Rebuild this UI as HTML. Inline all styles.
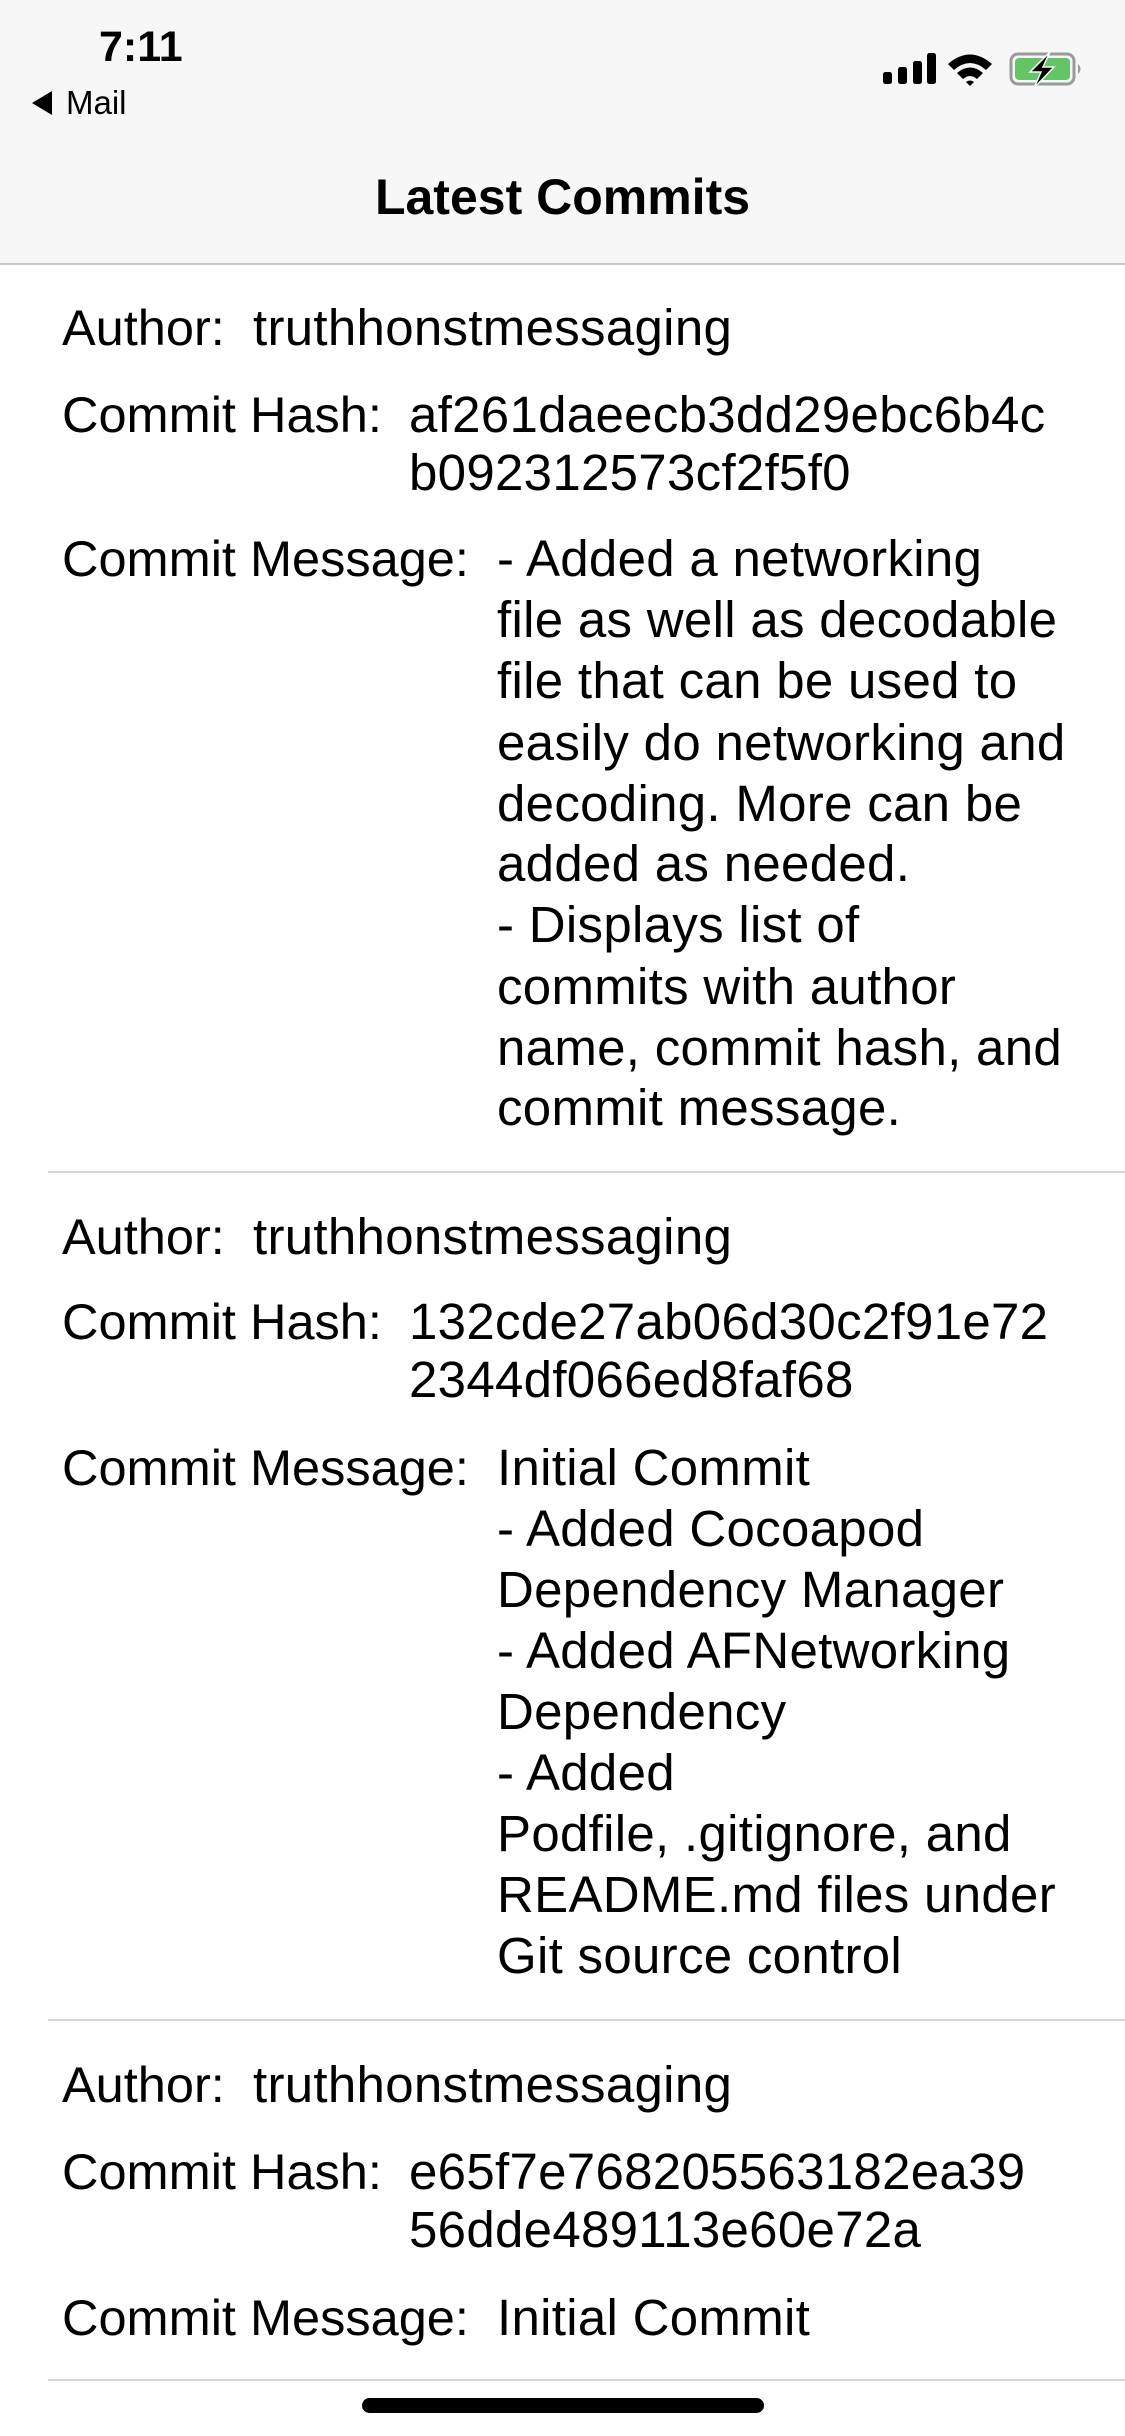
<!DOCTYPE html>
<html><head><meta charset="utf-8"><style>
html,body{margin:0;padding:0;}
body{width:1125px;height:2436px;position:relative;background:#fff;font-family:"Liberation Sans",sans-serif;color:#000;overflow:hidden;}
.hdr{position:absolute;left:0;top:0;width:1125px;height:263px;background:#f7f7f7;border-bottom:2px solid #c6c6c8;}
.t{position:absolute;height:60px;line-height:60px;font-size:51px;letter-spacing:0.3px;white-space:nowrap;}
.l{font-size:50.5px;letter-spacing:0;}
.sep{position:absolute;left:48px;right:0;height:2px;background:#d6d6d8;}
</style></head><body>
<div class="hdr"></div>
<div style="position:absolute;left:99px;top:22px;font-size:43px;font-weight:bold;line-height:50px;">7:11</div>
<svg style="position:absolute;left:32px;top:91px" width="20" height="24"><path d="M20 0 L20 24 L0 12 Z" fill="#000"/></svg>
<div style="position:absolute;left:66px;top:83px;font-size:33px;line-height:40px;">Mail</div>
<svg style="position:absolute;left:880px;top:50px" width="220" height="40">
<rect x="3" y="22" width="9" height="12" rx="2.5" fill="#000"/>
<rect x="18" y="17" width="9" height="17" rx="2.5" fill="#000"/>
<rect x="33" y="11" width="9" height="23" rx="2.5" fill="#000"/>
<rect x="47" y="3" width="9" height="31" rx="2.5" fill="#000"/>
<path d="M68 14 Q90 -5 112 14 L106 20 Q90 6 74 20 Z" fill="#000"/>
<path d="M77 23 Q90 12 103 23 L97 29 Q90 23 83 29 Z" fill="#000"/>
<path d="M86 32 Q90 29 94 32 L90 36 Z" fill="#000"/>
<rect x="131" y="4" width="63" height="30" rx="7" fill="none" stroke="#9a9a9a" stroke-width="3"/>
<rect x="135" y="8" width="55" height="22" rx="4" fill="#64c466"/>
<path d="M198 14 Q203 19 198 24 Z" fill="#9a9a9a"/>
<path d="M170 2 L150 22 L161 22 L154 38 L174 17 L163 17 Z" fill="#000" stroke="#f7f7f7" stroke-width="1.5"/>
</svg>
<div style="position:absolute;left:0;width:1125px;top:167px;text-align:center;font-size:50px;font-weight:bold;line-height:60px;">Latest Commits</div>

<div class="t l" style="left:62px;top:298px">Author:</div><div class="t" style="left:253px;top:298px">truthhonstmessaging</div>
<div class="t l" style="left:62px;top:385px">Commit Hash:</div>
<div class="t" style="left:409px;top:385px">af261daeecb3dd29ebc6b4c</div>
<div class="t" style="left:409px;top:443px">b092312573cf2f5f0</div>
<div class="t l" style="left:62px;top:529px">Commit Message:</div>
<div class="t" style="left:497px;top:529px">- Added a networking</div>
<div class="t" style="left:497px;top:590px">file as well as decodable</div>
<div class="t" style="left:497px;top:651px">file that can be used to</div>
<div class="t" style="left:497px;top:713px">easily do networking and</div>
<div class="t" style="left:497px;top:774px">decoding. More can be</div>
<div class="t" style="left:497px;top:834px">added as needed.</div>
<div class="t" style="left:497px;top:895px">- Displays list of</div>
<div class="t" style="left:497px;top:957px">commits with author</div>
<div class="t" style="left:497px;top:1018px">name, commit hash, and</div>
<div class="t" style="left:497px;top:1078px">commit message.</div>
<div class="sep" style="top:1171px"></div>

<div class="t l" style="left:62px;top:1207px">Author:</div><div class="t" style="left:253px;top:1207px">truthhonstmessaging</div>
<div class="t l" style="left:62px;top:1292px">Commit Hash:</div>
<div class="t" style="left:409px;top:1292px">132cde27ab06d30c2f91e72</div>
<div class="t" style="left:409px;top:1350px">2344df066ed8faf68</div>
<div class="t l" style="left:62px;top:1438px">Commit Message:</div>
<div class="t" style="left:497px;top:1438px">Initial Commit</div>
<div class="t" style="left:497px;top:1499px">- Added Cocoapod</div>
<div class="t" style="left:497px;top:1560px">Dependency Manager</div>
<div class="t" style="left:497px;top:1621px">- Added AFNetworking</div>
<div class="t" style="left:497px;top:1682px">Dependency</div>
<div class="t" style="left:497px;top:1743px">- Added</div>
<div class="t" style="left:497px;top:1804px">Podfile, .gitignore, and</div>
<div class="t" style="left:497px;top:1865px">README.md files under</div>
<div class="t" style="left:497px;top:1926px">Git source control</div>
<div class="sep" style="top:2019px"></div>

<div class="t l" style="left:62px;top:2055px">Author:</div><div class="t" style="left:253px;top:2055px">truthhonstmessaging</div>
<div class="t l" style="left:62px;top:2142px">Commit Hash:</div>
<div class="t" style="left:409px;top:2142px">e65f7e768205563182ea39</div>
<div class="t" style="left:409px;top:2200px">56dde489113e60e72a</div>
<div class="t l" style="left:62px;top:2288px">Commit Message:</div>
<div class="t" style="left:497px;top:2288px">Initial Commit</div>
<div class="sep" style="top:2379px"></div>

<div style="position:absolute;left:362px;top:2398px;width:402px;height:15px;border-radius:8px;background:#000;"></div>
</body></html>
